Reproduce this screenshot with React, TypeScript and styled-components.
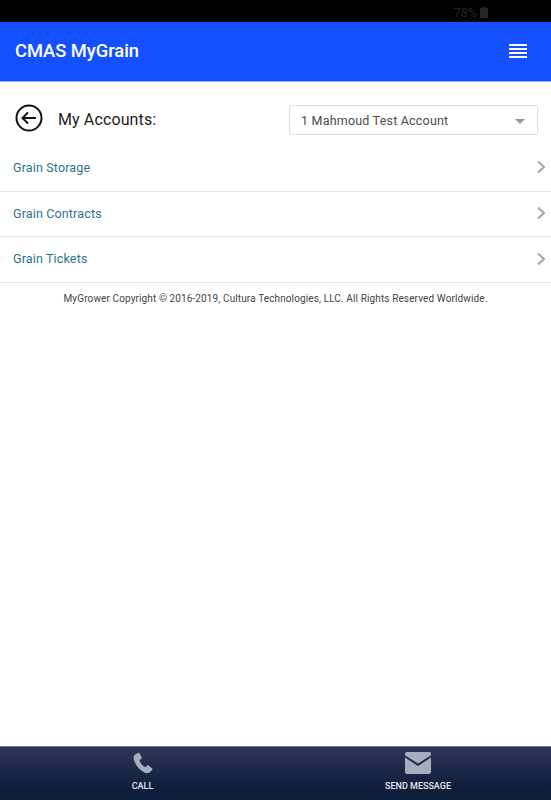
import React from 'react';
import styled, {createGlobalStyle} from 'styled-components';

const GlobalStyle = createGlobalStyle`
    * {
        box-sizing: border-box;
    }
    html, body {
        margin: 0;
        padding: 0;
        background: #fff;
    }
    body {
        font-family: Roboto, "Liberation Sans", sans-serif;
    }
`;

const Page = styled.div`
    width: 551px;
    height: 800px;
    display: flex;
    flex-direction: column;
    overflow: hidden;
`;

const StatusBar = styled.div`
    height: 22px;
    background: #000;
    display: flex;
    justify-content: flex-end;
    align-items: center;
    gap: 3px;
    padding: 2px 63px 0 0;
    color: #262626;
    font-size: 12.5px;
`;

const Header = styled.header`
    height: 60px;
    background: #1450ff;
    border-bottom: 1px solid #8fb0f5;
    display: flex;
    align-items: center;
    justify-content: space-between;
    padding: 0 24px 3px 15px;
    color: #fff;
`;

const Title = styled.h1`
    margin: 0;
    font-size: 18.3px;
    font-weight: 500;
`;

const MenuIcon = styled.svg`
    margin-top: 2px;
    fill: #fff;
`;

const AccountsRow = styled.div`
    display: flex;
    align-items: center;
    height: 64px;
    padding: 12px 13px 0 13px;
`;

const BackButton = styled.div`
    width: 32px;
    height: 32px;
    display: flex;
    margin-right: 13px;
    margin-top: -4px;
`;

const AccountsLabel = styled.div`
    font-size: 16px;
    color: #1c1c1c;
    letter-spacing: 0.12px;
    flex: 1;
    margin-top: -2px;
`;

const AccountSelect = styled.div`
    width: 249px;
    height: 30px;
    border: 1px solid #e0e0e0;
    border-radius: 2px;
    display: flex;
    align-items: center;
    justify-content: space-between;
    padding: 0 12px 0 11px;
    font-size: 12.5px;
    letter-spacing: 0.2px;
    color: #4c4c4c;
`;

const Caret = styled.span`
    width: 0;
    height: 0;
    border-left: 5px solid transparent;
    border-right: 5px solid transparent;
    border-top: 5px solid #9a9a9a;
    margin-top: 3px;
`;

const MenuList = styled.nav`
    display: flex;
    flex-direction: column;
`;

const MenuRow = styled.div`
    height: 45.7px;
    border-bottom: 1px solid #e4e4e4;
    display: flex;
    align-items: center;
    justify-content: space-between;
    padding: 0 5px 2px 13px;
    color: #2c7291;
    font-size: 12.5px;
    letter-spacing: 0.15px;
`;

const Copyright = styled.div`
    text-align: center;
    font-size: 10px;
    color: #444;
    letter-spacing: 0.12px;
    margin-top: 10px;
    flex: 1;
`;

const Footer = styled.footer`
    height: 54px;
    background: linear-gradient(#2f3557, #0f1f3d 75%, #0c1e3a);
    border-top: 1px solid #70737f;
    display: grid;
    grid-template-columns: 285px 266px;
    color: #e8e8ec;
`;

const FooterAction = styled.div`
    display: flex;
    flex-direction: column;
    align-items: center;
    justify-content: flex-start;
    padding-top: 5px;
    font-size: 9px;
    font-weight: 500;
`;

const FooterIcon = styled.svg`
    height: 22px;
    margin-bottom: 7px;
    fill: #a6adbe;
`;

const Chevron = () => (
    <svg width="10" height="14" viewBox="0 0 10 14" fill="none" stroke="#a6a6a6" strokeWidth="2">
        <path d="M2 1.500 L8 7 L2 12.500"/>
    </svg>
);

const menuItems = ['Grain Storage', 'Grain Contracts', 'Grain Tickets'];

export default function App() {
    return (
        <Page>
            <GlobalStyle/>
            <StatusBar>
                <span>78%</span>
                <svg width="8" height="11" viewBox="0 0 8 11" fill="#262626">
                    <path d="M2.500 0h3v1H8v10H0V1h2.500z"/>
                </svg>
            </StatusBar>
            <Header>
                <Title>CMAS MyGrain</Title>
                <MenuIcon width="18" height="15" viewBox="0 0 18 15">
                    <rect y="0" width="18" height="2"/>
                    <rect y="4" width="18" height="2"/>
                    <rect y="8" width="18" height="2"/>
                    <rect y="12" width="18" height="2"/>
                </MenuIcon>
            </Header>
            <AccountsRow>
                <BackButton>
                    <svg width="32" height="32" viewBox="0 0 32 32" fill="none" stroke="#111" strokeWidth="2">
                        <circle cx="16" cy="16" r="12.500"/>
                        <path d="M23 16H9.500M15 10.500 9.500 16l5.500 5.500"/>
                    </svg>
                </BackButton>
                <AccountsLabel>My Accounts:</AccountsLabel>
                <AccountSelect>
                    <span>1 Mahmoud Test Account</span>
                    <Caret/>
                </AccountSelect>
            </AccountsRow>
            <MenuList>
                {menuItems.map((item) => (
                    <MenuRow key={item}>
                        <span>{item}</span>
                        <Chevron/>
                    </MenuRow>
                ))}
            </MenuList>
            <Copyright>MyGrower Copyright © 2016-2019, Cultura Technologies, LLC. All Rights Reserved Worldwide.</Copyright>
            <Footer>
                <FooterAction>
                    <FooterIcon viewBox="0 0 22 24" width="22">
                        <path d="M5.500 1 2 3C.6 4 .5 6 1 8c1.500 6 6 12 12 14.500 2 .8 4 .6 5.500-.5l2.500-2.500c.5-.6.4-1.400-.2-1.900l-3.800-2.800c-.6-.4-1.300-.4-1.800.1l-1.700 1.700c-2.800-1.300-5.500-4.500-6.500-7.800l2-1.300c.6-.4.8-1.100.5-1.700L7.300 1.500C6.900.8 6.200.6 5.500 1z"/>
                    </FooterIcon>
                    <span>CALL</span>
                </FooterAction>
                <FooterAction>
                    <FooterIcon viewBox="0 0 26 22" width="26">
                        <path d="M2 0h22c1 0 2 .7 2 1.500v1.800L13 11.500 0 3.300V1.500C0 .7 1 0 2 0z"/>
                        <path d="M0 5.500 13 14l13-8.500V20c0 1.100-.9 2-2 2H2c-1.100 0-2-.9-2-2z"/>
                    </FooterIcon>
                    <span>SEND MESSAGE</span>
                </FooterAction>
            </Footer>
        </Page>
    );
}
